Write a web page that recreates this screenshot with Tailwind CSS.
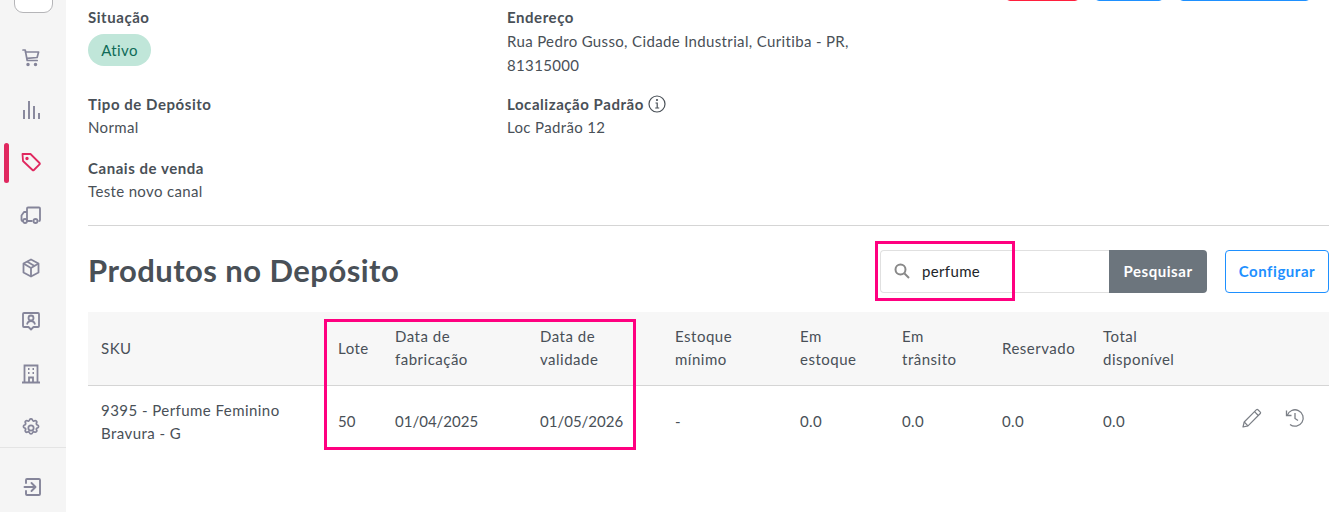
<!DOCTYPE html>
<html lang="en">
<head>
<meta charset="UTF-8">
<title>Produtos no Depósito</title>
<script src="https://cdn.jsdelivr.net/npm/@tailwindcss/browser@4"></script>
</head>
<body class="bg-white font-['Lato',sans-serif] text-[15px] text-[#495057] tracking-[0.35px]">
<div class="relative flex h-[512px] w-[1335px] overflow-hidden">

	<!-- sidebar -->
	<aside class="relative flex w-[66px] shrink-0 flex-col items-center bg-[#f5f5f5] text-[#85859a]">
		<div class="absolute left-[14px] top-[-20px] h-[33px] w-[39px] rounded-[9px] border border-[#b5b5b8] bg-white"></div>
		<div class="absolute left-[4px] top-[143px] h-[40px] w-[5px] rounded-full bg-[#e0285f]"></div>

		<div class="flex h-[447px] flex-col items-center pr-[5px] pt-[48px]">
			<svg class="mb-[32px] h-[20px] w-[20px]" viewBox="0 0 20 20" fill="none" stroke="currentColor" stroke-width="1.700" stroke-linejoin="round" stroke-linecap="round"><path d="M2 2h2.200l2 10.500h10"/><path d="M4.600 4h13l-1.500 5.500-10.200.8"/><circle cx="7" cy="16.500" r=".9"/><circle cx="14.500" cy="16.500" r=".9"/></svg>
			<svg class="mb-[32px] h-[20px] w-[20px]" viewBox="0 0 20 20" fill="none" stroke="currentColor" stroke-width="1.900"><path d="M3 19v-9M8 19V1M13 19V6M18 19v-6"/></svg>
			<svg class="mb-[33px] h-[20px] w-[20px] text-[#e0285f]" viewBox="0 0 20 20" fill="none" stroke="currentColor" stroke-width="1.800" stroke-linejoin="round"><path d="M1.500 2h8l9 9a1 1 0 0 1 0 1.400l-5.600 5.600a1 1 0 0 1-1.400 0l-9.500-9z"/><circle cx="6" cy="6.500" r=".8"/></svg>
			<svg class="mb-[33px] h-[20px] w-[21px]" viewBox="0 0 21 20" fill="none" stroke="currentColor" stroke-width="1.800" stroke-linejoin="round"><path d="M7 15V3.500a1 1 0 0 1 1-1h11a1 1 0 0 1 1 1V15a1 1 0 0 1-1 1h-.5M12.500 16H7"/><path d="M7 7H4L1.500 10.500V15a1 1 0 0 0 1 1H3"/><circle cx="5" cy="16" r="2"/><circle cx="15.500" cy="16" r="2"/></svg>
			<svg class="mb-[33px] h-[20px] w-[20px]" viewBox="0 0 20 20" fill="none" stroke="currentColor" stroke-width="1.800" stroke-linejoin="round"><path d="M10 1.500l7.500 4v9l-7.500 4-7.500-4v-9z"/><path d="M2.500 5.500L10 10l7.500-4.500M10 10v8.500M6 3.500l7.500 4.500"/></svg>
			<svg class="mb-[33px] h-[20px] w-[20px]" viewBox="0 0 20 20" fill="none" stroke="currentColor" stroke-width="1.800" stroke-linejoin="round"><path d="M3 2h14a1 1 0 0 1 1 1v12a1 1 0 0 1-1 1h-4.500L10 18.500 7.500 16H3a1 1 0 0 1-1-1V3a1 1 0 0 1 1-1z"/><circle cx="10" cy="7" r="2.500"/><path d="M6 13.500c.5-2.500 2-3.500 4-3.500s3.500 1 4 3.500"/></svg>
			<svg class="mb-[34px] h-[20px] w-[20px]" viewBox="0 0 20 20" fill="none" stroke="currentColor" stroke-width="1.800"><path d="M1 18.500h18M3.500 18.500V1.500h13v17M8 18.500v-5h4v5"/><path d="M7 5h1.500M11.500 5H13M7 9h1.500M11.500 9H13"/></svg>
			<svg class="h-[20px] w-[20px]" viewBox="0 0 24 24" fill="none" stroke="currentColor" stroke-width="2.100" stroke-linecap="round" stroke-linejoin="round"><path d="M10.300 2.300c.4-1.700 3-1.700 3.400 0a1.700 1.700 0 0 0 2.600 1.100c1.500-.9 3.300.8 2.400 2.400a1.700 1.700 0 0 0 1.100 2.600c1.700.4 1.700 3 0 3.400a1.700 1.700 0 0 0-1.100 2.600c.9 1.500-.8 3.300-2.400 2.400a1.700 1.700 0 0 0-2.600 1.100c-.4 1.700-3 1.700-3.400 0a1.700 1.700 0 0 0-2.600-1.100c-1.500.9-3.300-.8-2.400-2.400a1.700 1.700 0 0 0-1.100-2.600c-1.700-.4-1.700-3 0-3.400a1.700 1.700 0 0 0 1.100-2.600c-.9-1.500.8-3.300 2.400-2.400a1.700 1.700 0 0 0 2.600-1.100z"/><circle cx="12" cy="12" r="3.200"/></svg>
		</div>
		<div class="flex w-full flex-1 justify-center border-t border-[#e4e4e4] pt-[29px]">
			<svg class="h-[20px] w-[20px]" viewBox="0 0 20 20" fill="none" stroke="currentColor" stroke-width="1.900" stroke-linejoin="round" stroke-linecap="round"><path d="M3 6V3a1 1 0 0 1 1-1h12a1 1 0 0 1 1 1v14a1 1 0 0 1-1 1H4a1 1 0 0 1-1-1v-3"/><path d="M1.500 10H12M8.500 6l4 4-4 4"/></svg>
		</div>
	</aside>

	<!-- main -->
	<main class="relative flex-1 pl-[22px] pr-[6px]">
		<div class="absolute right-[25px] top-[-10px] flex gap-[16px]">
			<div class="h-[11px] w-[73px] rounded-[4px] border border-[#ff1f3d]"></div>
			<div class="h-[11px] w-[68px] rounded-[4px] border border-[#1e90ff]"></div>
			<div class="h-[11px] w-[131px] rounded-[4px] border border-[#1e90ff]"></div>
		</div>

		<section class="flex h-[226px] border-b border-[#d5d5d5] pt-[5px]">
			<div class="w-[419px]">
				<p class="h-[24px] font-bold leading-[24px] tracking-[0.55px]">Situação</p>
				<div class="mt-[5px] flex h-[32px] w-[63px] items-center justify-center rounded-full bg-[#c0e6d9] text-[#0f6b58]">Ativo</div>
				<p class="mt-[26px] h-[23px] font-bold leading-[24px] tracking-[0.55px]">Tipo de Depósito</p>
				<p class="h-[24px] leading-[24px]">Normal</p>
				<p class="mt-[17px] h-[23px] font-bold leading-[24px] tracking-[0.55px]">Canais de venda</p>
				<p class="h-[24px] leading-[24px]">Teste novo canal</p>
			</div>
			<div class="w-[360px]">
				<p class="h-[24px] font-bold leading-[24px] tracking-[0.55px]">Endereço</p>
				<p class="leading-[24px]">Rua Pedro Gusso, Cidade Industrial, Curitiba - PR,<br>81315000</p>
				<p class="mt-[15px] flex h-[23px] items-center gap-[4px] font-bold leading-[24px] tracking-[0.55px]">Localização Padrão
					<svg class="h-[18px] w-[18px]" viewBox="0 0 18 18" fill="none" stroke="currentColor" stroke-width="1.200"><circle cx="9" cy="9" r="8"/><path d="M7.500 8h1.700v5M7.200 13h4"/><circle cx="9" cy="5" r=".5"/></svg>
				</p>
				<p class="h-[24px] leading-[24px]">Loc Padrão 12</p>
			</div>
		</section>

		<section class="flex h-[86px] items-center justify-between pt-[4px]">
			<h2 class="-mt-[2px] text-[31px] font-bold tracking-[0.45px] text-[#495057]">Produtos no Depósito</h2>
			<div class="flex h-[43px] items-center">
				<div class="flex h-[43px] w-[229px] items-center rounded-l-[4px] border border-r-0 border-[#e0e0e0] pl-[13px] text-[#212529]">
					<svg class="mr-[12px] h-[16px] w-[16px] text-[#888]" viewBox="0 0 16 16" fill="none" stroke="currentColor" stroke-width="2"><circle cx="6.500" cy="6.500" r="5"/><path d="M10.500 10.500L15 15"/></svg>
					perfume
				</div>
				<div class="flex h-[43px] w-[98px] items-center justify-center rounded-r-[4px] bg-[#6c757d] font-bold tracking-[0.55px] text-white">Pesquisar</div>
				<div class="ml-[18px] flex h-[43px] w-[104px] items-center justify-center rounded-[4px] border border-[#1e90ff] font-bold tracking-[0.55px] text-[#1e90ff]">Configurar</div>
			</div>
		</section>

		<table class="w-[1241px] table-fixed border-collapse text-left">
			<thead>
				<tr class="h-[73px] border-b border-[#d5d5d5] bg-[#f7f7f7] leading-[23px] tracking-[0.5px]">
					<th class="w-[237px] pl-[13px] font-normal">SKU</th>
					<th class="w-[57px] pl-[13px] font-normal">Lote</th>
					<th class="w-[145px] pl-[13px] font-normal">Data de<br>fabricação</th>
					<th class="w-[135px] pl-[13px] font-normal">Data de<br>validade</th>
					<th class="w-[125px] pl-[13px] font-normal">Estoque<br>mínimo</th>
					<th class="w-[102px] pl-[13px] font-normal">Em<br>estoque</th>
					<th class="w-[100px] pl-[13px] font-normal">Em<br>trânsito</th>
					<th class="w-[101px] pl-[13px] font-normal">Reservado</th>
					<th class="w-[138px] pl-[13px] font-normal">Total<br>disponível</th>
					<th class="font-normal"></th>
				</tr>
			</thead>
			<tbody>
				<tr class="h-[72px] leading-[23px]">
					<td class="pl-[13px] pt-[2px] tracking-[0.45px]">9395 - Perfume Feminino<br>Bravura - G</td>
					<td class="pl-[13px] tracking-[0px]">50</td>
					<td class="pl-[13px] tracking-[0px]">01/04/2025</td>
					<td class="pl-[13px] tracking-[0px]">01/05/2026</td>
					<td class="pl-[13px]">-</td>
					<td class="pl-[13px]">0.0</td>
					<td class="pl-[13px]">0.0</td>
					<td class="pl-[13px]">0.0</td>
					<td class="pl-[13px]">0.0</td>
					<td>
						<div class="flex items-center gap-[23px] pb-[6px] pl-[14px]">
							<svg class="h-[20px] w-[20px] text-[#7b7f86]" viewBox="0 0 20 20" fill="none" stroke="currentColor" stroke-width="1.200" stroke-linejoin="round"><path d="M1 19l1.200-5L14.500 1.700a1 1 0 0 1 1.400 0l2.400 2.400a1 1 0 0 1 0 1.400L6 17.800z"/><path d="M12.500 3.700l3.800 3.800M2.200 14L6 17.800"/></svg>
							<svg class="h-[20px] w-[20px] text-[#7b7f86]" viewBox="0 0 20 20" fill="none" stroke="currentColor" stroke-width="1.300"><path d="M2.200 7.500A8.200 8.200 0 1 1 5 16.500"/><path d="M1.500 2.500v5h5"/><path d="M10 5v5.500l3 2"/></svg>
						</div>
					</td>
				</tr>
			</tbody>
		</table>
	</main>

	<!-- annotation boxes -->
	<div class="absolute left-[875px] top-[241px] h-[60px] w-[140px] border-[3px] border-[#ff0080]"></div>
	<div class="absolute left-[324px] top-[319px] h-[131px] w-[312px] border-[3px] border-[#ff0080]"></div>
</div>
</body>
</html>
